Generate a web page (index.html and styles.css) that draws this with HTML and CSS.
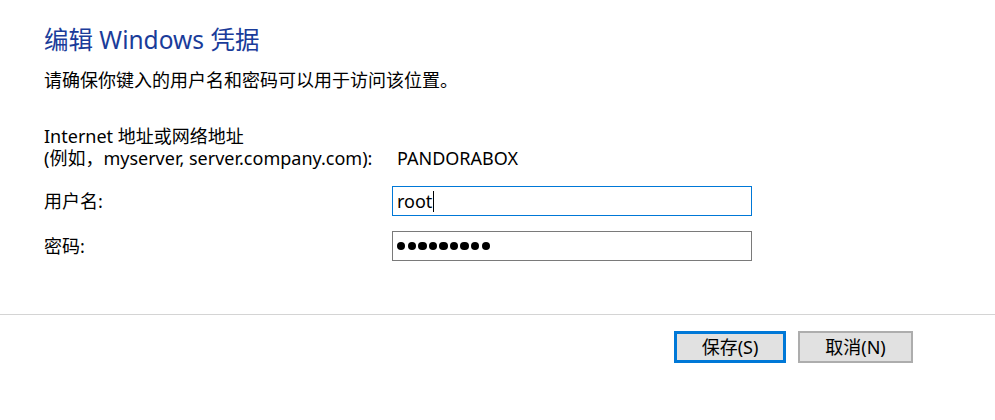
FILE: index.html
```html
<!DOCTYPE html>
<html lang="zh-CN">
<head>
<meta charset="utf-8">
<title>编辑 Windows 凭据</title>
<link rel="stylesheet" href="styles.css">
</head>
<body>
<div class="dialog">
  <div class="content">
    <h1 class="title">编辑 Windows 凭据</h1>
    <p class="desc">请确保你键入的用户名和密码可以用于访问该位置。</p>
    <div class="form">
      <div class="label addr-label">Internet 地址或网络地址<br>(例如，myserver, server.company.com):</div>
      <div class="value addr-value">PANDORABOX</div>
      <div class="label row-label">用户名:</div>
      <div class="field focused"><span class="field-text">root</span><span class="caret"></span></div>
      <div class="label row-label">密码:</div>
      <div class="field"><span class="dots"><i></i><i></i><i></i><i></i><i></i><i></i><i></i><i></i><i></i></span></div>
    </div>
  </div>
  <div class="footer">
    <button class="btn primary" type="button">保存(S)</button>
    <button class="btn" type="button">取消(N)</button>
  </div>
</div>
</body>
</html>
```
FILE: styles.css
```css
html, body {
  margin: 0;
  padding: 0;
  background: #ffffff;
}
body {
  font-family: "Noto Sans", "Noto Sans CJK SC", sans-serif;
  color: #000000;
  font-size: 18px;
}
.dialog {
  width: 995px;
  height: 420px;
}
.content {
  padding: 24px 0 0 44px;
  height: 315px;
  box-sizing: border-box;
  border-bottom: 1px solid #d4d4d4;
}
.title {
  margin: 0;
  font-size: 24.5px;
  line-height: 32px;
  font-weight: normal;
  color: #1a3c9a;
}
.desc {
  margin: 12px 0 0 0;
  line-height: 24px;
}
.form {
  margin-top: 33px;
  display: grid;
  grid-template-columns: 348px 360px;
  grid-template-rows: 46px 30px 30px;
  row-gap: 15px;
}
.label,
.addr-value {
  line-height: 22px;
}
.addr-label {
  align-self: start;
}
.addr-value {
  align-self: end;
  padding-left: 5px;
  margin-bottom: 2px;
}
.row-label {
  align-self: center;
}
.field {
  box-sizing: border-box;
  height: 30px;
  border: 1px solid #7a7a7a;
  display: flex;
  align-items: center;
  padding-left: 4px;
  font-size: 18px;
}
.field.focused {
  border-color: #0078d7;
}
.field-text {
  line-height: 26px;
}
.caret {
  display: inline-block;
  width: 1px;
  height: 21px;
  background: #000;
  margin-left: 1px;
}
.dots {
  display: flex;
  align-items: center;
}
.dots i {
  display: block;
  width: 8.4px;
  height: 8.4px;
  border-radius: 50%;
  background: #000;
  margin-right: 2.2px;
}
.footer {
  display: flex;
  justify-content: flex-end;
  gap: 12px;
  padding: 16px 82px 0 0;
}
.btn {
  box-sizing: border-box;
  width: 115px;
  height: 32px;
  font-family: "Noto Sans", "Noto Sans CJK SC", sans-serif;
  font-size: 18px;
  color: #000;
  background: #e1e1e1;
  border: 2px solid #adadad;
  border-radius: 0;
  padding: 0;
  line-height: 26px;
}
.btn.primary {
  border: 3px solid #0078d7;
  width: 112px;
}
```
